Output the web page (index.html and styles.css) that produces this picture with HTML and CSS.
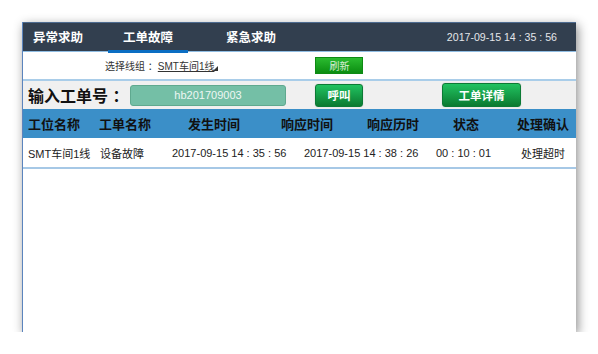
FILE: index.html
```html
<!DOCTYPE html>
<html lang="zh-CN">
<head>
    <meta charset="UTF-8">
    <title>工单故障</title>
    <link rel="stylesheet" href="styles.css">
</head>
<body>

<div class="window">
    <div class="topbar">
        <nav class="tabs">
            <a class="tab tab-first">异常求助</a>
            <a class="tab active">工单故障</a>
            <a class="tab tab-last">紧急求助</a>
        </nav>
        <div class="clock">2017-09-15 14 : 35 : 56</div>
    </div>

    <!-- line group selector -->
    <div class="line-select">
        <span class="select-label">选择线组 ：</span>
        <span class="select-value">SMT车间1线<i class="select-arrow"></i></span>
        <button class="btn-refresh">刷新</button>
    </div>

    <!-- order input -->
    <div class="order-bar">
        <span class="order-label">输入工单号 ：</span>
        <div class="order-input">hb201709003</div>
        <button class="btn btn-call">呼叫</button>
        <button class="btn btn-detail">工单详情</button>
    </div>

    <div class="grid-head">
        <span>工位名称</span>
        <span>工单名称</span>
        <span>发生时间</span>
        <span>响应时间</span>
        <span>响应历时</span>
        <span>状态</span>
        <span>处理确认</span>
    </div>
    <div class="grid-row">
        <span>SMT车间1线</span>
        <span>设备故障</span>
        <span>2017-09-15 14 : 35 : 56</span>
        <span>2017-09-15 14 : 38 : 26</span>
        <span>00 : 10 : 01</span>
        <span>处理超时</span>
    </div>
</div>

</body>
</html>
```

FILE: styles.css
```css
body {
    margin: 0;
    background-color: #fff;
    font-family: "Liberation Sans", "Noto Sans CJK SC", sans-serif;
}
.window {
    margin: 22px 0 0 22px;
    width: 554px;
    height: 310px;
    box-sizing: border-box;
    border-left: 1px solid #5b84bd;
    background-color: #fff;
    box-shadow: 2px 3px 10px rgba(0, 0, 0, 0.45);
    overflow: hidden;
}
.topbar {
    height: 30px;
    box-sizing: border-box;
    background-color: #323f4f;
    border-top: 1px solid #4d6b90;
    border-bottom: 1px solid #8fbde3;
    display: flex;
    justify-content: space-between;
    align-items: stretch;
}
.tabs {
    display: flex;
    padding-left: 10px;
}
.tab {
    display: flex;
    align-items: center;
    color: #fff;
    font-size: 12.5px;
    font-weight: bold;
    padding: 0 15px;
    box-sizing: border-box;
    border-bottom: 3px solid transparent;
    margin-bottom: -2px;
}
.tab-first {
    padding: 0;
    margin-right: 25px;
}
.tab-last {
    margin-left: 23px;
}
.tab.active {
    border-bottom-color: #0b6ec3;
}
.clock {
    display: flex;
    align-items: center;
    color: #e4e6ea;
    font-size: 10.6px;
    padding-right: 19px;
}
.line-select {
    height: 27px;
    display: flex;
    align-items: center;
    padding-left: 82px;
    font-size: 10px;
    color: #333;
}
.select-value {
    position: relative;
    text-decoration: underline;
    padding-right: 4px;
}
.select-arrow {
    position: absolute;
    right: 0;
    bottom: 2px;
    width: 0;
    height: 0;
    border-left: 5px solid transparent;
    border-bottom: 5px solid #333;
}
.btn-refresh {
    margin-left: 97px;
    width: 48px;
    height: 17px;
    padding: 0;
    border: 1px solid #0e8a14;
    background: linear-gradient(#2bbb30, #0b8d11);
    color: #d8eed8;
    font-family: inherit;
    font-size: 10px;
}
.order-bar {
    height: 28px;
    background-color: #f0f0f0;
    border-top: 2px solid #a9cde9;
    display: flex;
    align-items: center;
    padding-left: 5px;
}
.order-label {
    width: 102px;
    font-size: 16px;
    font-weight: bold;
    color: #111;
    white-space: nowrap;
}
.order-input {
    width: 156px;
    height: 21px;
    box-sizing: border-box;
    border: 1px solid #5fa98f;
    border-radius: 3px;
    background-color: #74bfa6;
    color: #eef7f3;
    font-size: 11px;
    display: flex;
    align-items: center;
    justify-content: center;
}
.btn {
    height: 23px;
    padding: 0;
    border: 1px solid #0c7a35;
    border-radius: 3px;
    background: linear-gradient(#21c260, #0b7a30);
    color: #fff;
    font-family: inherit;
    font-size: 11.5px;
    font-weight: bold;
    box-shadow: 0 0 1px rgba(0, 0, 0, 0.3);
}
.btn-call {
    margin-left: 29px;
    width: 48px;
}
.btn-detail {
    margin-left: 79px;
    width: 79px;
    height: 24px;
}
.grid-head,
.grid-row {
    display: grid;
    align-items: center;
    padding-left: 5px;
    white-space: nowrap;
}
.grid-head {
    height: 29px;
    background-color: #3b8fc8;
    grid-template-columns: 71px 89px 93px 86px 86px 64px 1fr;
    font-size: 13px;
    font-weight: bold;
    color: #111;
}
.grid-row {
    height: 29px;
    border-bottom: 2px solid #a6c8e6;
    grid-template-columns: 72px 72px 132px 132px 85px 1fr;
    font-size: 11px;
    color: #222;
}
```
